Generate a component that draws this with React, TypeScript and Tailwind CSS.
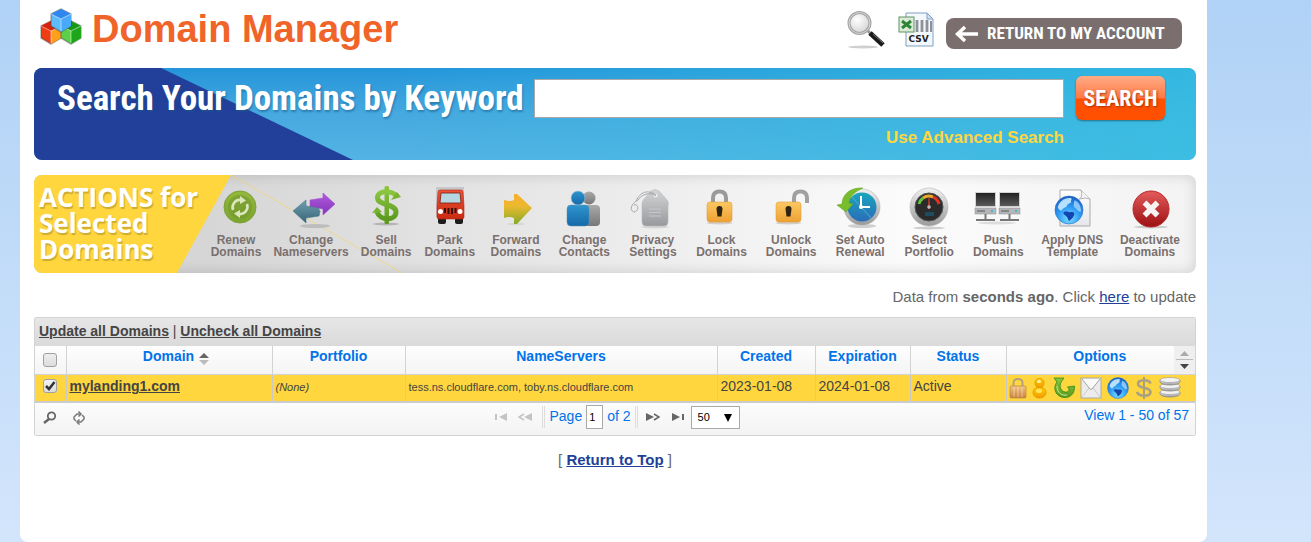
import React from "react";

type IconProps = { children: React.ReactNode };

function ActionSvg({ children }: IconProps) {
  return (
    <svg viewBox="0 0 44 42" className="h-[42px] w-11 overflow-visible" aria-hidden="true">
      {children}
    </svg>
  );
}

function Gradients() {
  const defs: [string, string, string][] = [
    ["gGreen", "#8cc63f", "#5b9a1f"],
    ["gRenew", "#93b83c", "#7aa52e"],
    ["gTeal", "#6fa0b0", "#386578"],
    ["gPurple", "#b25ade", "#8034b8"],
    ["gRed", "#ea5238", "#c92a12"],
    ["gArrow", "#f8ae2e", "#8fae2e"],
    ["gBlue", "#2f95cf", "#1569a8"],
    ["gGrey", "#aaaaaa", "#777777"],
    ["gTag", "#d4d5d7", "#97999c"],
    ["gLock", "#fcc862", "#eea133"],
    ["gMetal", "#f0f0f0", "#9a9a9a"],
    ["gClock", "#19a5bd", "#2a6db8"],
    ["gScreen", "#222222", "#5a5a5a"],
    ["gStop", "#e45c5c", "#9c0f12"],
    ["gPaper", "#ffffff", "#e4e6ea"],
    ["gWood", "#f4c27c", "#c9803c"],
    ["gGold", "#ffd200", "#f39a00"],
  ];
  return (
    <svg width="0" height="0" className="absolute" aria-hidden="true">
      <defs>
        {defs.map(([id, a, b]) => (
          <linearGradient
            key={id}
            id={id}
            x1="0"
            y1="0"
            x2="0"
            y2="1"
          >
            <stop offset="0" stopColor={a} />
            <stop offset="1" stopColor={b} />
          </linearGradient>
        ))}
        <linearGradient id="gForward" gradientUnits="userSpaceOnUse" x1="0" y1="7" x2="0" y2="37">
          <stop offset="0" stopColor="#f8ae2e" />
          <stop offset="0.4" stopColor="#ecb92e" />
          <stop offset="1" stopColor="#86aa2a" />
        </linearGradient>
        <radialGradient id="gGlobe" cx="0.5" cy="0.8" r="0.8">
          <stop offset="0" stopColor="#7de0ff" />
          <stop offset="0.5" stopColor="#2f9bf6" />
          <stop offset="1" stopColor="#1a5fc4" />
        </radialGradient>
        <radialGradient id="gLens" cx="0.4" cy="0.35" r="0.7">
          <stop offset="0" stopColor="#ffffff" />
          <stop offset="1" stopColor="#d2d2d2" />
        </radialGradient>
      </defs>
    </svg>
  );
}

function Globe({ cx, cy, r }: { cx: number; cy: number; r: number }) {
  return (
    <g transform={`translate(${cx} ${cy}) scale(${r / 10})`}>
      <circle r="10" fill="url(#gGlobe)" stroke="#2a6cc0" strokeWidth="0.4" />
      <path
        d="M-8 -2 C-7 -6 -3 -9 1 -8.500 C3 -8 1 -7 1.500 -6 C2 -5 -1 -4.500 -1.500 -3 C-2 -1.500 -4 -2 -5 0 C-6 1 -7 0 -8 -2 Z"
        fill="#c5ebff"
        opacity="0.9"
      />
      <path d="M4 -7 C7 -6 9 -2 8.500 1 C7 2 6 0 5 -1 C3 -2 3 -4 4 -7 Z" fill="#a8dcff" opacity="0.75" />
      <path d="M-3.500 1.500 C-2 0.500 0 2 1 1.500 C3 1 4.500 2 3.500 4 C3 6 1 7 0 8 C-1 6.500 -1 5 -2.500 4 C-4 3 -4.500 2 -3.500 1.500 Z" fill="#1247b2" />
    </g>
  );
}

function RenewIcon() {
  return (
    <ActionSvg>
      <circle cx="26" cy="20" r="16" fill="url(#gRenew)" stroke="#7f9f3c" />
      <circle cx="26" cy="20" r="12" fill="#6f9430" opacity="0.5" />
      <g fill="none" stroke="#dbe7ba" strokeWidth="2.6">
        <path d="M19 23 A7.5 7.5 0 0 1 27 13" />
        <path d="M33 17 A7.5 7.5 0 0 1 25 27" />
      </g>
      <path d="M26 9 L32 13.500 L26 17 Z M26 31 L20 26.500 L26 23 Z" fill="#dbe7ba" />
    </ActionSvg>
  );
}

function ChangeIcon() {
  return (
    <ActionSvg>
      <ellipse cx="26" cy="39" rx="15" ry="2" fill="#bdbdbd" />
      <path d="M46 17 L34 6 V11 L21 13 V20 L34 22 V28 Z" fill="url(#gPurple)" stroke="#a44fd4" strokeWidth="0.6" />
      <path d="M4 24 L17 13 V19 L29 21 L31 24 L30 29 L17 31 V36 Z" fill="url(#gTeal)" stroke="#4c7889" strokeWidth="0.6" />
    </ActionSvg>
  );
}

function SellIcon() {
  return (
    <ActionSvg>
      <ellipse cx="22" cy="37" rx="13" ry="1.500" fill="#b5b5b5" />
      <rect x="20.500" y="-1" width="4.500" height="38" rx="1.500" fill="url(#gGreen)" />
      <path
        d="M33 10 C30 3 13 2.500 13.500 11 C14 19 32 16 32 25 C32 34 16 34 13 25"
        fill="none"
        stroke="url(#gGreen)"
        strokeWidth="5"
      />
      <path d="M27 13 L37 10 L33 5 Z M8 26 L13 20 L18 25 Z" fill="#78b32e" />
    </ActionSvg>
  );
}

function ParkIcon() {
  return (
    <ActionSvg>
      <path d="M8 0 H36 V30 H8 Z" fill="#c5c7ca" />
      <rect x="10" y="30" width="8" height="7" rx="2" fill="#1c1c1c" />
      <rect x="27" y="30" width="8" height="7" rx="2" fill="#1c1c1c" />
      <path d="M12 3 H33 Q35 3 35 5 L36 19 V30 Q36 32 34 32 H11 Q9 32 9 30 V19 L10 5 Q10 3 12 3 Z" fill="url(#gRed)" stroke="#b52812" strokeWidth="0.6" />
      <path d="M13 6 H32 L33 16 H12 Z" fill="#b6d6e0" stroke="#792015" strokeWidth="0.8" />
      <path d="M17 21 V26 M20.500 21 V27 M24 21 V27 M27.500 21 V26" stroke="#38100b" strokeWidth="2" />
      <circle cx="12.500" cy="24.500" r="2.500" fill="#fff" />
      <circle cx="32" cy="24.500" r="2.500" fill="#fff" />
    </ActionSvg>
  );
}

function ForwardIcon() {
  return (
    <ActionSvg>
      <ellipse cx="22" cy="37" rx="9" ry="1.500" fill="#d8d8d8" />
      <path d="M10 13 Q16 15 20 13 V7 H23 L38 21 L23 37 H20 V31 Q15 29 10 31 Z" fill="url(#gForward)" />
    </ActionSvg>
  );
}

function ContactsIcon() {
  return (
    <ActionSvg>
      <circle cx="27" cy="11" r="6.500" fill="url(#gGrey)" />
      <rect x="18" y="18" width="20" height="21" rx="4" fill="url(#gGrey)" />
      <rect x="5" y="18" width="22" height="21" rx="4" fill="url(#gBlue)" stroke="#5b8fb0" strokeWidth="0.5" />
      <circle cx="16" cy="11" r="7" fill="url(#gBlue)" stroke="#bcd" strokeWidth="0.5" />
    </ActionSvg>
  );
}

function PrivacyIcon() {
  return (
    <ActionSvg>
      <ellipse cx="24" cy="40" rx="14" ry="1.500" fill="#d5d5d5" />
      <path d="M20 4 Q24 1 28 4 L36 13 Q38 15 37 19 V35 Q37 39 33 39 H15 Q11 39 11 35 V18 Q11 14 13 12 Z" fill="url(#gTag)" stroke="#b7b9bb" strokeWidth="0.6" />
      <circle cx="24.500" cy="8.500" r="2" fill="#eee" />
      <path d="M25 9 C19 4 10 8 7 13 C0 17 -2 23 3 25 C9 24 7 16 3 18 M25 8 C17 2 9 5 5 14" fill="none" stroke="#a6a8aa" strokeWidth="1" />
      <path d="M18 22 H30 M18 25.500 H30 M18 29 H30" stroke="#c3c5c8" strokeWidth="1.200" />
    </ActionSvg>
  );
}

function LockBody() {
  return (
    <>
      <ellipse cx="19.500" cy="36" rx="13" ry="1.500" fill="#d2cec5" />
      <rect x="7" y="15" width="25" height="20" rx="3" fill="url(#gLock)" stroke="#e0a040" strokeWidth="0.6" />
      <path d="M19.500 19 Q22.500 19 22.500 22 L21.500 29.500 H17.500 L16.500 22 Q16.500 19 19.500 19" fill="#2d2412" />
    </>
  );
}

function LockIcon() {
  return (
    <ActionSvg>
      <path d="M13 15 V11 Q13 4.500 19.500 4.500 Q26 4.500 26 11 V15" fill="none" stroke="#9a9a9a" strokeWidth="4" />
      <LockBody />
    </ActionSvg>
  );
}

function UnlockIcon() {
  return (
    <ActionSvg>
      <path d="M25 15 V11 Q25 4.500 31.500 4.500 Q38 4.500 38 11 V16" fill="none" stroke="#a0a0a0" strokeWidth="4" />
      <LockBody />
    </ActionSvg>
  );
}

function AutoIcon() {
  return (
    <ActionSvg>
      <ellipse cx="24" cy="39" rx="14" ry="2" fill="#cfcfcf" />
      <circle cx="24" cy="20" r="18" fill="url(#gMetal)" stroke="#aaa" strokeWidth="0.5" />
      <circle cx="24" cy="20" r="14.500" fill="url(#gClock)" />
      <path d="M14 10 L34 32" stroke="#69b5d8" strokeWidth="0.8" />
      <path d="M23 9 V20 H32" fill="none" stroke="#fff" strokeWidth="2" />
      <circle cx="23" cy="20" r="2" fill="#fff" />
      <path d="M25 1 C13 0 4 7 4 17 L-1 18 L8 25 L15 17 L11 16 C12 9 16 5 25 1" fill="#79bd2c" stroke="#5d9e1d" strokeWidth="0.5" />
    </ActionSvg>
  );
}

function GaugeIcon() {
  return (
    <ActionSvg>
      <ellipse cx="22" cy="41" rx="16" ry="1.500" fill="#cfcfcf" />
      <circle cx="22" cy="20" r="19" fill="url(#gMetal)" stroke="#b3b3b3" strokeWidth="0.6" />
      <circle cx="22" cy="20" r="14" fill="#2b2b2b" stroke="#555" />
      <g fill="none" strokeWidth="3">
        <path d="M12 17 A10.500 10.500 0 0 1 16 11" stroke="#64c33d" />
        <path d="M16 11 A10.500 10.500 0 0 1 26 10" stroke="#eaa82d" />
        <path d="M26 10 A10.500 10.500 0 0 1 32 17" stroke="#dd3224" />
      </g>
      <path d="M21 22 L21.500 11 H22.500 L23 22 Z" fill="#e0392a" />
      <circle cx="22" cy="20" r="1.800" fill="#bbb" />
      <rect x="18" y="25" width="9" height="4" fill="#1e4d62" />
    </ActionSvg>
  );
}

function Monitor({ x }: { x: number }) {
  return (
    <g transform={`translate(${x} 0)`}>
      <rect x="0" y="5" width="21" height="15" fill="#d2d2d2" />
      <rect x="1" y="6" width="19" height="13" fill="url(#gScreen)" />
      <rect x="0" y="21" width="21" height="6" fill="#b4b6b8" stroke="#8e9092" strokeWidth="0.5" />
      <path d="M2 24 H10" stroke="#555" />
      <rect x="16" y="23" width="2" height="2" fill="#3bb9d6" />
      <path d="M10.500 27 V32 M1 33 H20" stroke="#777" strokeWidth="2" />
    </g>
  );
}

function PushIcon() {
  return (
    <ActionSvg>
      <ellipse cx="21" cy="36" rx="19" ry="1.500" fill="#ddd" />
      <Monitor x={-1} />
      <Monitor x={23} />
    </ActionSvg>
  );
}

function TemplateIcon() {
  return (
    <ActionSvg>
      <path d="M10 3 H31 L40 12 V39 H10 Z" fill="url(#gPaper)" stroke="#aaa" />
      <path d="M31 3 Q33 11 29 12 Q36 10 40 12" fill="#f5f5f5" stroke="#b4b4b4" />
      <Globe cx={19} cy={23} r={14} />
    </ActionSvg>
  );
}

function DeactivateIcon() {
  return (
    <ActionSvg>
      <ellipse cx="23" cy="40" rx="17" ry="1.500" fill="#ccc" />
      <circle cx="23" cy="22" r="18" fill="url(#gStop)" stroke="#b8282a" />
      <path d="M16.500 15.500 L29.500 28.500 M29.500 15.500 L16.500 28.500" stroke="#f7f3f3" strokeWidth="5.500" />
    </ActionSvg>
  );
}

const actions = [
  { a: "Renew", b: "Domains", Icon: RenewIcon },
  { a: "Change", b: "Nameservers", Icon: ChangeIcon },
  { a: "Sell", b: "Domains", Icon: SellIcon },
  { a: "Park", b: "Domains", Icon: ParkIcon },
  { a: "Forward", b: "Domains", Icon: ForwardIcon },
  { a: "Change", b: "Contacts", Icon: ContactsIcon },
  { a: "Privacy", b: "Settings", Icon: PrivacyIcon },
  { a: "Lock", b: "Domains", Icon: LockIcon },
  { a: "Unlock", b: "Domains", Icon: UnlockIcon },
  { a: "Set Auto", b: "Renewal", Icon: AutoIcon },
  { a: "Select", b: "Portfolio", Icon: GaugeIcon },
  { a: "Push", b: "Domains", Icon: PushIcon },
  { a: "Apply DNS", b: "Template", Icon: TemplateIcon },
  { a: "Deactivate", b: "Domains", Icon: DeactivateIcon },
];

function Cube({ x, y, top, left, right }: { x: number; y: number; top: string; left: string; right: string }) {
  return (
    <g transform={`translate(${x} ${y})`} strokeLinejoin="round">
      <path d="M10 0 L20 5 V17 L10 23 L0 17 V5 Z" fill={left} stroke="#444" strokeOpacity="0.4" strokeWidth="1.500" />
      <path d="M10 0 L20 5 L10 10 L0 5 Z" fill={top} />
      <path d="M10 10 L20 5 V17 L10 23 Z" fill={right} />
      <path d="M0 5 L10 10 L20 5 M10 10 V22" fill="none" stroke="#fff" strokeOpacity="0.5" strokeWidth="1" />
    </g>
  );
}

function Logo() {
  return (
    <svg viewBox="0 0 42 38" className="h-[38px] w-[42px]" aria-hidden="true">
      <Cube x={1} y={13} top="#d8220c" left="#ee3d10" right="#ffa01c" />
      <Cube x={21} y={13} top="#169a14" left="#5cd048" right="#1fa51a" />
      <Cube x={11} y={1} top="#2f86ee" left="#5cbcff" right="#48a8fa" />
    </svg>
  );
}

function Magnifier() {
  return (
    <svg viewBox="0 0 38 38" className="size-[38px]" aria-hidden="true">
      <ellipse cx="16" cy="36" rx="15" ry="1.500" fill="#cfcfcf" />
      <path d="M20 19 L25 24" stroke="#999" strokeWidth="3" />
      <path d="M23 22 L36 34" stroke="#1a1a1a" strokeWidth="5" />
      <path d="M26 23 L36 32" stroke="#777" strokeWidth="1" />
      <circle cx="12.500" cy="12" r="10.500" fill="url(#gLens)" stroke="#a3a3a3" strokeWidth="3" />
      <circle cx="12.500" cy="12" r="10.500" fill="none" stroke="#d8d8d8" strokeWidth="1" />
    </svg>
  );
}

function CsvIcon() {
  return (
    <svg viewBox="0 0 38 36" className="h-9 w-[38px]" aria-hidden="true">
      <path d="M9 1 H30 L36 7 V34 H9 Z" fill="#f4f8fd" stroke="#7f9fc4" />
      <path d="M20 8 V20 M25 8 V20 M30 8 V20" stroke="#8e9298" strokeWidth="2.800" />
      <path d="M34 9 V20" stroke="#8e9298" strokeWidth="2" />
      <path d="M30 1 V7 H36 Z" fill="#cfe0f2" stroke="#7f9fc4" />
      <rect x="2" y="5" width="15" height="15" fill="#dcebd9" stroke="#5f9660" />
      <path d="M5 9 L14 16 M14 9 L5 16" stroke="#2e8536" strokeWidth="3" />
      <text x="21.500" y="30" textAnchor="middle" fontSize="9" fontWeight="bold" fontFamily="DejaVu Sans" fill="#222">
        CSV
      </text>
    </svg>
  );
}

function OptionSvg({ children }: IconProps) {
  return (
    <svg viewBox="0 0 22 22" className="size-[22px]" aria-hidden="true">
      {children}
    </svg>
  );
}

const rowOptions: { label: string; width: string; icon: React.ReactNode }[] = [
  {
    label: "Lock",
    width: "w-[22px]",
    icon: (
      <OptionSvg>
        <path d="M6.500 11 V6 Q6.500 2 11 2 Q15.500 2 15.500 6 V11" fill="none" stroke="#b5a27c" strokeWidth="2" />
        <rect x="3" y="9" width="16" height="12" rx="1" fill="url(#gWood)" stroke="#b98a4e" strokeWidth="0.7" />
        <path d="M7 10 V20 M11 10 V20 M15 10 V20" stroke="#fff" strokeOpacity="0.3" strokeWidth="1.500" />
      </OptionSvg>
    ),
  },
  {
    label: "Contacts",
    width: "w-[22px]",
    icon: (
      <OptionSvg>
        <ellipse cx="10.500" cy="15.500" rx="6.500" ry="5.500" fill="url(#gGold)" stroke="#e49b00" />
        <circle cx="10.500" cy="6" r="4.500" fill="url(#gGold)" stroke="#e49b00" />
        <ellipse cx="10" cy="4.500" rx="2" ry="1.500" fill="#fff3a8" />
        <ellipse cx="10" cy="14" rx="3" ry="2" fill="#ffe45c" />
      </OptionSvg>
    ),
  },
  {
    label: "Renew",
    width: "w-[27px]",
    icon: (
      <OptionSvg>
        <path d="M1 1 H11 L8.500 4.500 C5 10 9 16 14 15 C17 14 16 11 14.500 10 L21.500 9 C22 17 17 21 11 20.500 C3 20 -1 11 4 5 Z" fill="url(#gGreen)" stroke="#2f8b14" strokeWidth="0.8" />
        <path d="M4 9 C4 16 9 19 14 18" fill="none" stroke="#c8ee8e" strokeWidth="1" />
      </OptionSvg>
    ),
  },
  {
    label: "Email",
    width: "w-[27px]",
    icon: (
      <OptionSvg>
        <rect x="1" y="1" width="20" height="20" fill="#ececec" stroke="#a9a9a9" />
        <path d="M2 20 L9 11 M20 20 L13 11" stroke="#c9c9c9" />
        <path d="M2 2 L10 12 Q11 13 12 12 L20 2" fill="#fafafa" stroke="#a4a4a4" />
      </OptionSvg>
    ),
  },
  {
    label: "Nameservers",
    width: "w-[26px]",
    icon: (
      <OptionSvg>
        <Globe cx={11} cy={11} r={10.5} />
      </OptionSvg>
    ),
  },
  {
    label: "Sell",
    width: "w-[26px]",
    icon: (
      <OptionSvg>
        <path d="M17.500 6.500 C16 2 5 2 5 7 C5 12 17.500 9.500 17.500 15 C17.500 20 6 20 4 15" fill="none" stroke="#a9a083" strokeWidth="2.600" />
        <path d="M11 0 V22" stroke="#a9a083" strokeWidth="2" />
      </OptionSvg>
    ),
  },
  {
    label: "DNS records",
    width: "w-[26px]",
    icon: (
      <OptionSvg>
        {[14, 8, 2].map((y) => (
          <g key={y}>
            <path d={`M1 ${y + 1} V${y + 3} C2 ${y + 7} 20 ${y + 7} 21 ${y + 3} V${y + 1} Z`} fill="url(#gMetal)" stroke="#8a8a8a" strokeWidth="0.8" />
            <ellipse cx="11" cy={y + 1} rx="10" ry="2.500" fill="#f2f2f2" stroke="#999" strokeWidth="0.6" />
          </g>
        ))}
      </OptionSvg>
    ),
  },
];

const thClass = "h-[28px] border-b border-l border-[#d3d3d3] pb-[6px] text-center font-bold text-[#0073ea]";
const tdClass = "h-[28px] border-l border-[#c9c9c9] pb-[2px] pl-[3px] text-left";

export default function App() {
  return (
    <div className="min-h-screen bg-linear-to-b from-[#b0d2f6] to-[#d3e5fb] pr-[104px] pl-5 font-['Liberation_Sans',Arial,sans-serif] text-[#666]">
      <Gradients />
      <main className="min-h-screen rounded-b-lg bg-white pr-[11px] pl-[14px]">
        <header className="flex h-[68px] items-start justify-between pt-2 pr-[14px] pl-[6px]">
          <div className="flex items-start gap-[10px]">
            <Logo />
            <h1 className="text-[38px] leading-[42px] font-bold text-[#f0642a]">Domain Manager</h1>
          </div>
          <div className="flex items-center pt-[3px]">
            <a href="#search" aria-label="Search" className="mr-3">
              <Magnifier />
            </a>
            <a href="#csv" aria-label="Export CSV" className="mr-[11px]">
              <CsvIcon />
            </a>
            <a
              href="#account"
              className="mt-[7px] flex h-[31px] w-[236px] items-center gap-[8px] rounded-lg bg-[#7a6f6e] pl-[9px] font-['Liberation_Sans_Narrow','Roboto_Condensed','Liberation_Sans',sans-serif] text-[17px] font-bold whitespace-nowrap text-white"
            >
              <svg viewBox="0 0 24 18" className="h-[18px] w-6" aria-hidden="true">
                <path d="M10 2 L2.500 9 L10 16 M3 9 H23" fill="none" stroke="#fff" strokeWidth="3.500" />
              </svg>
              RETURN TO MY ACCOUNT
            </a>
          </div>
        </header>

        <section className="relative h-[92px] overflow-hidden rounded-lg bg-linear-to-b from-[#2395da] via-[#46a9df] to-[#53b3e4]">
          <div className="absolute inset-0 bg-linear-to-r from-transparent from-30% to-[#36c0e2]/80" />
          <svg viewBox="0 0 320 92" className="absolute top-0 left-0 h-[92px] w-80" aria-hidden="true">
            <path d="M0 0 H127 L319 92 H0 Z" fill="#223f99" />
          </svg>
          <form className="relative flex pt-2 pr-[31px] pl-[23px]" onSubmit={(e) => e.preventDefault()}>
            <label
              htmlFor="keyword"
              className="w-[477px] shrink-0 font-['Liberation_Sans_Narrow','Roboto_Condensed','Liberation_Sans',sans-serif] text-[35px] leading-[46px] font-bold whitespace-nowrap text-white [text-shadow:1px_2px_2px_#1b5a8a88]"
            >
              Search Your Domains by Keyword
            </label>
            <div className="flex min-w-0 flex-1 flex-col items-end pt-[3px]">
              <input id="keyword" type="text" className="h-[39px] w-full border border-[#a9a9a9] bg-white px-2 text-base text-[#333]" />
              <a href="#advanced" className="mt-[9px] text-[17px] leading-[22px] font-bold text-[#ffd63e]">
                Use Advanced Search
              </a>
            </div>
            <button
              type="submit"
              className="ml-3 h-11 w-[89px] shrink-0 rounded-md bg-linear-to-b from-[#ffab85] via-[#ff7843] via-50% to-[#ff4f00] to-52% font-['Liberation_Sans_Narrow','Roboto_Condensed','Liberation_Sans',sans-serif] text-[22px] font-bold text-white shadow-[0_1px_2px_#00000066] [text-shadow:1px_1px_2px_#7a2a00aa]"
            >
              SEARCH
            </button>
          </form>
        </section>

        <section className="relative mt-[15px] h-[98px] overflow-hidden rounded-lg bg-linear-to-r from-[#d6d6d6] from-15% via-[#fbfbfb] via-75% to-[#f3f3f3] shadow-[inset_0_0_14px_#00000026]">
          <svg viewBox="0 0 370 98" className="absolute top-0 left-0 h-[98px] w-[370px]" aria-hidden="true">
            <path d="M0 0 H197 L143 98 H0 Z" fill="#ffd63e" />
            <path d="M197 0 L368 98" stroke="#ffd63e" strokeOpacity="0.5" />
          </svg>
          <div className="relative flex h-full">
            <h2 className="w-[171px] shrink-0 pt-[9px] pl-[5px] font-['Open_Sans','Noto_Sans',sans-serif] text-[26px] leading-[26px] font-bold whitespace-nowrap text-white [text-shadow:1px_2px_1px_#00000033]">
              ACTIONS for
              <br />
              Selected
              <br />
              Domains
            </h2>
            <div className="grid flex-1 grid-cols-[62fr_88fr_62fr_65fr_67fr_70fr_67fr_70fr_69fr_69fr_69fr_69fr_79fr_76fr] pr-2">
              {actions.map(({ a, b, Icon }) => (
                <button
                  key={a + b}
                  type="button"
                  className="flex min-w-0 flex-col items-center pt-3 text-center text-[12px] leading-3 font-bold whitespace-nowrap text-[#7a706e]"
                >
                  <Icon />
                  <span className="mt-[5px]">{a}</span>
                  <span>{b}</span>
                </button>
              ))}
            </div>
          </div>
        </section>

        <p className="mt-[14px] text-right text-[15px] leading-5">
          Data from <b>seconds ago</b>. Click{" "}
          <a href="#update" className="text-[#223f99] underline">
            here
          </a>{" "}
          to update
        </p>

        <section className="mt-[10px] rounded-xs border border-[#d3d3d3] text-[14px] text-[#444]">
          <div className="h-[28px] bg-linear-to-b from-[#e6e6e6] to-[#dadada] pl-1 leading-[27px] font-bold">
            <a href="#update-all" className="underline">
              Update all Domains
            </a>
            <span className="font-normal"> | </span>
            <a href="#uncheck-all" className="underline">
              Uncheck all Domains
            </a>
          </div>
          <table className="w-full table-fixed border-collapse">
            <colgroup>
              <col className="w-[31px]" />
              <col className="w-[206px]" />
              <col className="w-[133px]" />
              <col />
              <col className="w-[98px]" />
              <col className="w-[95px]" />
              <col className="w-[96px]" />
              <col className="w-[168px]" />
              <col className="w-[21px]" />
            </colgroup>
            <thead>
              <tr className="bg-linear-to-b from-[#fefefe] to-[#f4f4f4]">
                <th className="border-b border-[#d3d3d3] text-center">
                  <input
                    type="checkbox"
                    aria-label="Select all domains"
                    className="mx-auto block size-[14px] appearance-none rounded-[3px] border border-[#a0a0a0] bg-linear-to-b from-[#eee] to-[#dcdcdc]"
                  />
                </th>
                <th className={thClass}>
                  <button type="button" className="inline-flex items-center gap-[5px] pl-[14px] font-bold">
                    Domain
                    <svg viewBox="0 0 10 12" className="mt-1 h-3 w-[10px]" aria-hidden="true">
                      <path d="M0 5 L5 0 L10 5 Z" fill="#666" />
                      <path d="M0 7 L5 12 L10 7 Z" fill="#bbb" />
                    </svg>
                  </button>
                </th>
                <th className={thClass}>Portfolio</th>
                <th className={thClass}>NameServers</th>
                <th className={thClass}>Created</th>
                <th className={thClass}>Expiration</th>
                <th className={thClass}>Status</th>
                <th className={thClass}>
                  <span className="pl-[19px]">Options</span>
                </th>
                <td className="border-b border-[#d3d3d3] bg-[#efefef]">
                  <svg viewBox="0 0 17 20" className="mx-auto h-5 w-[17px]" aria-hidden="true">
                    <path d="M4 6 L8.500 1 L13 6 Z" fill="#aaa" />
                    <path d="M0 9.500 H17" stroke="#bbb" />
                    <path d="M4 14 L8.500 19 L13 14 Z" fill="#444" />
                  </svg>
                </td>
              </tr>
            </thead>
            <tbody>
              <tr className="border-b-2 border-[#cccccc] bg-[#ffd63e]">
                <td className="text-center">
                  <span className="relative mx-auto mb-[3px] block size-[14px]">
                    <input
                      type="checkbox"
                      defaultChecked
                      aria-label="Select mylanding1.com"
                      className="block size-[14px] appearance-none rounded-[3px] border border-[#a0a0a0] bg-linear-to-b from-[#f2f2f2] to-[#dcdcdc]"
                    />
                    <svg viewBox="0 0 14 14" className="pointer-events-none absolute inset-0 size-[14px]" aria-hidden="true">
                      <path d="M3 7 L6 10 L11.500 3" fill="none" stroke="#333" strokeWidth="2.500" />
                    </svg>
                  </span>
                </td>
                <td className={tdClass}>
                  <a href="#domain" className="font-bold underline">
                    mylanding1.com
                  </a>
                </td>
                <td className={tdClass}>
                  <i className="text-[11px]">(None)</i>
                </td>
                <td className={tdClass}>
                  <span className="text-[11px]">tess.ns.cloudflare.com, toby.ns.cloudflare.com</span>
                </td>
                <td className={tdClass}>2023-01-08</td>
                <td className={tdClass}>2024-01-08</td>
                <td className={tdClass}>Active</td>
                <td colSpan={2} className="border-l border-[#c9c9c9]">
                  <span className="flex">
                    {rowOptions.map((o) => (
                      <button key={o.label} type="button" aria-label={o.label} className={`flex shrink-0 justify-center ${o.width}`}>
                        {o.icon}
                      </button>
                    ))}
                  </span>
                </td>
              </tr>
            </tbody>
          </table>
          <div className="grid h-[32px] grid-cols-[1fr_auto_1fr] bg-linear-to-b from-[#fcfcfc] to-[#f3f3f3] text-[#0073ea]">
            <div className="flex items-start gap-[15px] pt-2 pl-2">
              <button type="button" aria-label="Find records">
                <svg viewBox="0 0 14 14" className="size-[14px]" aria-hidden="true">
                  <circle cx="8.500" cy="5" r="3.700" fill="none" stroke="#666" strokeWidth="1.800" />
                  <path d="M6 8 L1 12" stroke="#666" strokeWidth="2.500" />
                </svg>
              </button>
              <button type="button" aria-label="Reload grid">
                <svg viewBox="0 0 14 14" className="size-[14px]" aria-hidden="true">
                  <g fill="none" stroke="#777" strokeWidth="1.500">
                    <path d="M8 3 H5 L2 6 V8 L4 10 M6 11 H9 L12 8 V6 L10 4" />
                    <path d="M6.500 0.500 L9 3 L6.500 5.500 M7.500 8.500 L5 11 L7.500 13.500" />
                  </g>
                </svg>
              </button>
            </div>
            <div className="flex items-start pt-[2px] pl-[5px]">
              <div className="flex h-6 items-center">
                <button type="button" aria-label="First page" className="mr-[11px]">
                  <svg viewBox="0 0 12 8" className="h-2 w-3" aria-hidden="true">
                    <path d="M0 1 H2 V7 H0 Z M12 0 V8 L4 4 Z" fill="#c4c4c4" />
                  </svg>
                </button>
                <button type="button" aria-label="Previous page" className="mr-[10px]">
                  <svg viewBox="0 0 14 8" className="h-2 w-[14px]" aria-hidden="true">
                    <path d="M14 0 V8 L6 4 Z" fill="#c4c4c4" />
                    <path d="M6 1 L1 4 L6 7" fill="none" stroke="#c4c4c4" strokeWidth="1.500" />
                  </svg>
                </button>
                <span className="mr-1 h-[22px] w-[3px] border-x border-[#ddd]" />
                <label htmlFor="page" className="pb-[2px]">
                  Page
                </label>
                <input id="page" defaultValue="1" className="mx-1 h-6 w-[17px] border border-[#a9a9a9] bg-white px-[2px] text-[11px] text-black" />
                <span className="pb-[2px]">of 2</span>
                <span className="ml-1 h-[22px] w-[3px] border-x border-[#ddd]" />
                <button type="button" aria-label="Next page" className="ml-2">
                  <svg viewBox="0 0 14 8" className="h-2 w-[14px]" aria-hidden="true">
                    <path d="M0 0 V8 L8 4 Z" fill="#666" />
                    <path d="M8 1 L13 4 L8 7" fill="none" stroke="#666" strokeWidth="1.500" />
                  </svg>
                </button>
                <button type="button" aria-label="Last page" className="ml-3">
                  <svg viewBox="0 0 12 8" className="h-2 w-3" aria-hidden="true">
                    <path d="M10 1 H12 V7 H10 Z M0 0 V8 L8 4 Z" fill="#666" />
                  </svg>
                </button>
                <span className="relative ml-[7px]">
                  <select aria-label="Rows per page" className="block h-[23px] w-[49px] appearance-none border border-[#a9a9a9] bg-white pl-[6px] text-[11px] text-black">
                    <option>50</option>
                  </select>
                  <svg viewBox="0 0 8 8" className="pointer-events-none absolute top-2 right-2 size-2" aria-hidden="true">
                    <path d="M0 0 H8 L4 8 Z" fill="#000" />
                  </svg>
                </span>
              </div>
            </div>
            <p className="pt-[2px] pr-[6px] text-right leading-5">View 1 - 50 of 57</p>
          </div>
        </section>

        <p className="mt-[14px] text-center text-[15px] leading-5">
          [{" "}
          <a href="#top" className="font-bold text-[#223f99] underline">
            Return to Top
          </a>{" "}
          ]
        </p>
      </main>
    </div>
  );
}
